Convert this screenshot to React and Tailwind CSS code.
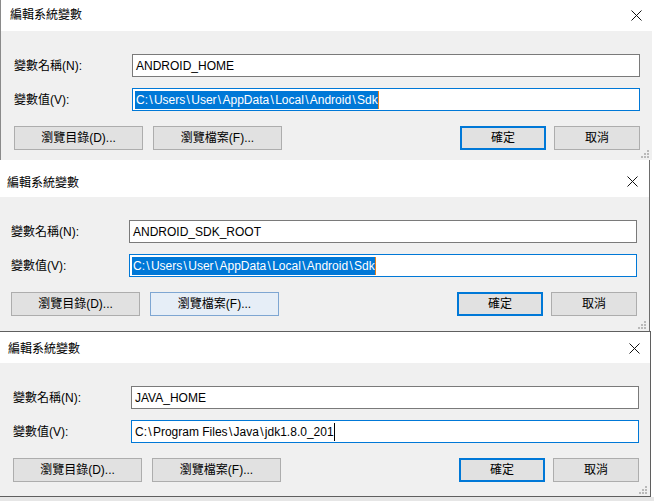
const font = "font-['Liberation_Sans','Noto_Sans_CJK_TC',sans-serif]"

function CloseIcon({ className }) {
  return (
    <svg width="11" height="11" viewBox="0 0 11 11" className={className}>
      <path d="M0.5 0.5 L10.5 10.5 M10.5 0.5 L0.5 10.5" stroke="#111" strokeWidth="1" />
    </svg>
  )
}

function Grip() {
  const dots = [[6, 0], [3, 3], [6, 3], [0, 6], [3, 6], [6, 6]]
  return (
    <svg width="8" height="8" viewBox="0 0 8 8" className="absolute right-[3px] bottom-[2px]">
      {dots.map(([x, y]) => (
        <rect key={`${x}-${y}`} x={x} y={y} width="2" height="2" fill="#b9b9b9" />
      ))}
    </svg>
  )
}

// Segoe UI draws the backslash wider than Arial does
function Path({ text }) {
  const parts = text.split('\\')
  return parts.map((p, i) => (
    <span key={i}>
      {i > 0 && <span className="px-[1.3px]">\</span>}
      {p}
    </span>
  ))
}

function Button({ children, variant, className = '' }) {
  const styles = {
    plain: 'bg-[#e1e1e1] border border-[#adadad]',
    hover: 'bg-[#e6eef7] border border-[#7ea6d2]',
    primary: 'bg-[#e1e1e1] border-2 border-[#0078d7]',
  }
  return (
    <div className={`h-[24px] flex items-center justify-center text-[12px] text-black ${styles[variant]} ${className}`}>
      {children}
    </div>
  )
}

function Dialog({ d }) {
  return (
    <div className={`relative ${d.outer}`}>
      <div className={`bg-white flex justify-between ${d.title}`}>
        <span className={`text-[12px] leading-[16px] text-black ${d.titleText}`}>編輯系統變數</span>
        <CloseIcon className={d.close} />
      </div>
      <div className={`relative bg-[#f0f0f0] pt-[23px] ${d.body}`}>
        <div className="w-[626px]">
          <div className="flex items-center">
            <span className="w-[118px] text-[12px]">變數名稱(N):</span>
            <div className="w-[508px] h-[23px] bg-white border border-[#7a7a7a] flex items-center pl-[3px] text-[12px]">
              {d.name}
            </div>
          </div>
          <div className="flex items-center mt-[11px]">
            <span className="w-[118px] text-[12px]">變數值(V):</span>
            <div className="w-[508px] h-[23px] bg-white border border-[#0078d7] flex items-center pl-[2px] text-[12px]">
              {d.selected ? (
                <span className="bg-[#0078d7] text-white leading-[18px] pl-[1px] border-r border-[#e8811c]">
                  <Path text={d.value} />
                </span>
              ) : (
                <span className="pl-[1px] leading-[18px] border-r border-black">
                  <Path text={d.value} />
                </span>
              )}
            </div>
          </div>
          <div className="flex mt-[15px]">
            <Button variant="plain" className="w-[129px]">瀏覽目錄(D)...</Button>
            <Button variant={d.hoverBrowse ? 'hover' : 'plain'} className="w-[129px] ml-[10px]">瀏覽檔案(F)...</Button>
            <Button variant="primary" className="w-[86px] ml-auto">確定</Button>
            <Button variant="plain" className="w-[86px] ml-[8px]">取消</Button>
          </div>
        </div>
        <Grip />
      </div>
    </div>
  )
}

const dialogs = [
  {
    outer: 'w-[652px] border-l border-[#8a8a8a]',
    title: 'h-[31px] pr-[10px]',
    titleText: 'pl-[9px] pt-[7px]',
    close: 'mt-[10px]',
    body: 'pl-[13px] pb-[10px]',
    name: 'ANDROID_HOME',
    value: 'C:\\Users\\User\\AppData\\Local\\Android\\Sdk',
    selected: true,
  },
  {
    outer: 'w-[650px] border-r border-[#6d6d6d]',
    title: 'h-[37px] pr-[11px]',
    titleText: 'pl-[7px] pt-[15px]',
    close: 'mt-[16px]',
    body: 'pl-[11px] pb-[15px]',
    name: 'ANDROID_SDK_ROOT',
    value: 'C:\\Users\\User\\AppData\\Local\\Android\\Sdk',
    selected: true,
    hoverBrowse: true,
  },
  {
    outer: 'w-[651px] border-t border-r border-b border-[#5f5f5f]',
    title: 'h-[31px] pr-[10px]',
    titleText: 'pl-[8px] pt-[9px]',
    close: 'mt-[11px]',
    body: 'pl-[13px] pb-[14px]',
    name: 'JAVA_HOME',
    value: 'C:\\Program Files\\Java\\jdk1.8.0_201',
    selected: false,
  },
]

export default function App() {
  return (
    <div className={`w-[654px] h-[501px] bg-white overflow-hidden text-black ${font}`}>
      {dialogs.map((d, i) => (
        <Dialog key={i} d={d} />
      ))}
      <div className="h-[4px] bg-[#e6e6e6]" />
    </div>
  )
}
